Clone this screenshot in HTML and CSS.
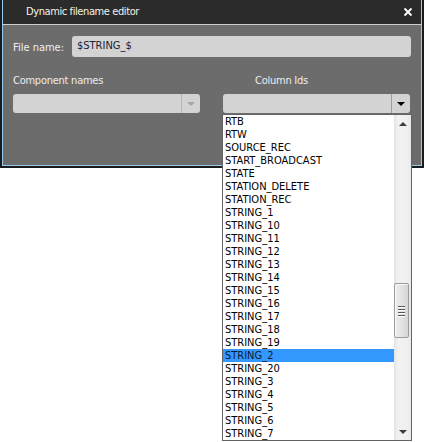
FILE: index.html
```html
<!DOCTYPE html>
<html>
<head>
<meta charset="utf-8">
<link rel="stylesheet" href="styles.css">
</head>
<body>
<div class="dialog">
  <div class="frame">
    <div class="titlebar">
      <span class="title">Dynamic filename editor</span>
      <svg class="close" width="10" height="10" viewBox="0 0 10 10"><path d="M1.5 1.5 L8.5 8.5 M8.5 1.5 L1.5 8.5" stroke="#ffffff" stroke-width="1.8" fill="none"/></svg>
    </div>
    <div class="body">
      <div class="file-row">
        <span class="file-label">File name:</span>
        <div class="input">$STRING_$</div>
      </div>
      <div class="cols">
        <div class="col">
          <div class="col-label">Component names</div>
          <div class="combo combo-disabled">
            <div class="combo-field"></div>
            <div class="combo-btn"><span class="tri tri-gray"></span></div>
          </div>
        </div>
        <div class="col">
          <div class="col-label col-label-ids">Column Ids</div>
          <div class="combo">
            <div class="combo-field"></div>
            <div class="combo-btn"><span class="tri"></span></div>
          </div>
        </div>
      </div>
    </div>
  </div>
</div>
<div class="dropdown">
  <ul class="items">
    <li>RTB</li>
    <li>RTW</li>
    <li>SOURCE_REC</li>
    <li>START_BROADCAST</li>
    <li>STATE</li>
    <li>STATION_DELETE</li>
    <li>STATION_REC</li>
    <li>STRING_1</li>
    <li>STRING_10</li>
    <li>STRING_11</li>
    <li>STRING_12</li>
    <li>STRING_13</li>
    <li>STRING_14</li>
    <li>STRING_15</li>
    <li>STRING_16</li>
    <li>STRING_17</li>
    <li>STRING_18</li>
    <li>STRING_19</li>
    <li class="selected">STRING_2</li>
    <li>STRING_20</li>
    <li>STRING_3</li>
    <li>STRING_4</li>
    <li>STRING_5</li>
    <li>STRING_6</li>
    <li>STRING_7</li>
  </ul>
  <div class="scrollbar">
    <div class="sb-btn"><span class="sb-tri-up"></span></div>
    <div class="sb-track">
      <div class="thumb">
        <span class="grip"></span><span class="grip"></span><span class="grip"></span><span class="grip"></span>
      </div>
    </div>
    <div class="sb-btn"><span class="sb-tri-down"></span></div>
  </div>
</div>
</body>
</html>
```
FILE: styles.css
```css
* { box-sizing: border-box; }
html, body { margin: 0; padding: 0; background: #ffffff; }
body {
  position: relative;
  width: 425px;
  height: 442px;
  overflow: hidden;
  font-family: "DejaVu Sans Condensed", "DejaVu Sans", "Liberation Sans", sans-serif;
  font-stretch: condensed;
  font-size: 11px;
}
.dialog {
  width: 424px;
  border: 2px solid #1b1b1b;
  border-top: none;
}
.frame {
  border: 1px solid #94cdee;
  border-top: none;
}
.titlebar {
  height: 25px;
  background: #2b2b2b;
  border-bottom: 1px solid #cfcfcf;
  display: flex;
  align-items: center;
  justify-content: space-between;
  padding: 0 8px 1px 23px;
}
.title {
  color: #f3f3e6;
  line-height: 14px;
  letter-spacing: -0.4px;
}
.close { display: block; }
.body {
  height: 140px;
  background: #6c6c6c;
  padding: 11px 10px 0 10px;
}
.file-row {
  display: flex;
  align-items: center;
  height: 21px;
}
.file-label {
  width: 59px;
  color: #f0f0f0;
  padding-top: 1px;
}
.input {
  flex: 1;
  height: 21px;
  background: #d3d3d3;
  border-radius: 3px;
  color: #1c2034;
  padding-left: 5px;
  line-height: 19px;
}
.cols {
  display: grid;
  grid-template-columns: 187px 187px;
  column-gap: 23px;
  margin-top: 17px;
}
.col-label {
  color: #ececec;
  line-height: 13px;
  letter-spacing: -0.25px;
}
.col-label-ids { padding-left: 32px; }
.combo {
  margin-top: 7px;
  height: 19px;
  display: flex;
  background: #d3d3d3;
  border-radius: 3px;
}
.combo-field { flex: 1; }
.combo-btn {
  width: 19px;
  border-left: 1px solid #9e9e9e;
  display: flex;
  align-items: center;
  justify-content: center;
}
.combo-disabled .combo-btn { border-left-color: #b4b4b4; }
.tri {
  width: 0;
  height: 0;
  border-left: 4px solid transparent;
  border-right: 4px solid transparent;
  border-top: 4px solid #000000;
  margin-top: 1px;
}
.tri-gray { border-top-color: #a6a6a6; }
.dropdown {
  position: absolute;
  left: 222px;
  top: 114px;
  width: 190px;
  height: 327px;
  background: #ffffff;
  border: 1px solid #646464;
  display: flex;
}
.items {
  list-style: none;
  margin: 0;
  padding: 0;
  flex: 1;
}
.items li {
  height: 13px;
  line-height: 13px;
  padding-left: 2px;
  color: #000000;
  white-space: nowrap;
}
.items li.selected {
  background: #3399ff;
  color: #101830;
}
.scrollbar {
  width: 17px;
  display: flex;
  flex-direction: column;
  background: linear-gradient(to right, #e4e4e4 0, #f2f2f2 25%, #f0f0f0 75%, #e9e9e9 100%);
}
.sb-btn {
  height: 17px;
  display: flex;
  align-items: center;
  justify-content: center;
}
.sb-tri-up, .sb-tri-down {
  width: 0;
  height: 0;
  border-left: 4px solid transparent;
  border-right: 4px solid transparent;
}
.sb-tri-up { border-bottom: 4px solid #3c3c3c; }
.sb-tri-down { border-top: 4px solid #3c3c3c; }
.sb-track { flex: 1; }
.thumb {
  margin-top: 151px;
  width: 15px;
  height: 55px;
  border: 1px solid #9b9b9b;
  border-radius: 2px;
  background: linear-gradient(to right, #eeeeee 0, #e2e2e2 50%, #d6d6d6 100%);
  box-shadow: inset 1px 1px 0 #fafafa;
  display: flex;
  flex-direction: column;
  align-items: center;
  justify-content: center;
  gap: 2px;
}
.grip {
  display: block;
  width: 7px;
  height: 1px;
  background: #585858;
  box-shadow: 0 1px 0 #ffffff;
}
```
